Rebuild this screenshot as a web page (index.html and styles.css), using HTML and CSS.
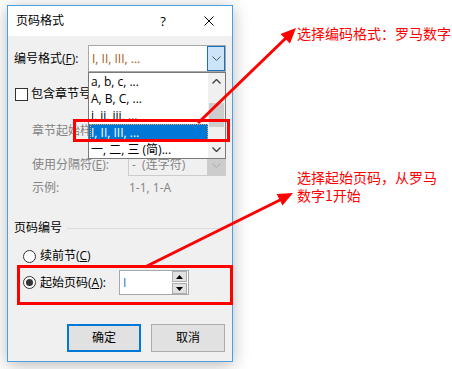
FILE: index.html
```html
<!DOCTYPE html>
<html lang="zh-CN">
<head>
<meta charset="utf-8">
<title>页码格式</title>
<link rel="stylesheet" href="styles.css">
</head>
<body>
<div class="page">
  <div class="dialog">
    <div class="titlebar">
      <span class="title">页码格式</span>
      <span class="cap-btn help">?</span>
      <span class="cap-btn close">
        <svg width="10" height="10" viewBox="0 0 10 10"><path d="M0.5 0.5L9.5 9.5M9.5 0.5L0.5 9.5" stroke="#000" stroke-width="1"/></svg>
      </span>
    </div>
    <div class="body">
      <div class="row r-format">
        <span class="lbl-main">编号格式(<u>F</u>):</span>
        <div class="combo focus">
          <span class="combo-text sel-text">I, II, III, ...</span>
          <span class="combo-btn active">
            <svg width="9" height="5" viewBox="0 0 9 5"><path d="M0.5 0.5L4.5 4.5L8.5 0.5" fill="none" stroke="#555" stroke-width="1"/></svg>
          </span>
          <div class="droplist">
            <ul class="items">
              <li>a, b, c, ...</li>
              <li>A, B, C, ...</li>
              <li>i, ii, iii, ...</li>
              <li class="selected"><span class="focus-rect">I, II, III, ...</span></li>
              <li>一, 二, 三 (简)...</li>
            </ul>
            <div class="scrollbar">
              <span class="sb-arrow">
                <svg width="9" height="5" viewBox="0 0 9 5"><path d="M0.5 4.5L4.5 0.5L8.5 4.5" fill="none" stroke="#444" stroke-width="1.4"/></svg>
              </span>
              <span class="sb-track"><span class="sb-thumb"></span></span>
              <span class="sb-arrow">
                <svg width="9" height="5" viewBox="0 0 9 5"><path d="M0.5 0.5L4.5 4.5L8.5 0.5" fill="none" stroke="#444" stroke-width="1.4"/></svg>
              </span>
            </div>
          </div>
        </div>
      </div>

      <div class="row r-check">
        <span class="checkbox"></span>
        <span class="chk-label">包含章节号(<u>N</u>)</span>
      </div>

      <div class="row r-indent r-style disabled">
        <span class="lbl-indent">章节起始样式(<u>P</u>):</span>
      </div>

      <div class="row r-indent r-sep disabled">
        <span class="lbl-indent">使用分隔符(<u>E</u>):</span>
        <div class="combo dis">
          <span class="combo-text">-&nbsp;&nbsp;(连字符)</span>
          <span class="combo-btn disbtn">
            <svg width="9" height="5" viewBox="0 0 9 5"><path d="M0.5 0.5L4.5 4.5L8.5 0.5" fill="none" stroke="#a8a8a8" stroke-width="1"/></svg>
          </span>
        </div>
      </div>

      <div class="row r-indent r-ex disabled">
        <span class="lbl-indent">示例:</span>
        <span class="ex-value">1-1, 1-A</span>
      </div>

      <div class="row r-group">
        <span class="group-title">页码编号</span>
        <span class="group-rule"></span>
      </div>

      <div class="row r-radio">
        <span class="radio"></span>
        <span class="radio-label">续前节(<u>C</u>)</span>
      </div>

      <div class="row r-radio r-start">
        <span class="radio on"></span>
        <span class="radio-label start-label">起始页码(<u>A</u>):</span>
        <div class="spin">
          <span class="spin-field">I</span>
          <span class="spin-btns">
            <span class="spin-btn"><svg width="7" height="4" viewBox="0 0 7 4"><path d="M0 4L3.5 0L7 4Z" fill="#000"/></svg></span>
            <span class="spin-btn"><svg width="7" height="4" viewBox="0 0 7 4"><path d="M0 0L3.5 4L7 0Z" fill="#000"/></svg></span>
          </span>
        </div>
      </div>

      <div class="row r-btns">
        <span class="btn default">确定</span>
        <span class="btn">取消</span>
      </div>
    </div>
  </div>

  <div class="notes">
    <p class="note note-1">选择编码格式：罗马数字</p>
    <p class="note note-2">选择起始页码，从罗马<br>数字1开始</p>
  </div>

  <svg class="overlay" width="452" height="369" viewBox="0 0 452 369">
    <rect x="74.5" y="120.5" width="154" height="20" fill="none" stroke="#ff0000" stroke-width="3"/>
    <rect x="18.5" y="266.5" width="213" height="37" fill="none" stroke="#ff0000" stroke-width="3"/>
    <line x1="198" y1="123" x2="287" y2="37" stroke="#ff0000" stroke-width="3"/>
    <polygon points="296,28 290,43.5 280.5,34" fill="#ff0000"/>
    <line x1="145" y1="267" x2="282" y2="199" stroke="#ff0000" stroke-width="3"/>
    <polygon points="293,193 282.5,205.6 276.7,194" fill="#ff0000"/>
  </svg>
</div>
</body>
</html>
```

FILE: styles.css
```css
* { box-sizing: border-box; }

html, body {
  margin: 0;
  padding: 0;
  background: #ffffff;
}

body {
  font-family: "Open Sans", "Noto Sans CJK SC", sans-serif;
  font-size: 12px;
  color: #000;
}

.page {
  position: relative;
  width: 452px;
  height: 369px;
  overflow: hidden;
  display: flex;
  align-items: flex-start;
}

u { text-decoration: underline; text-underline-offset: 1px; }

/* ---------- dialog ---------- */
.dialog {
  margin: 5px 0 0 7px;
  width: 226px;
  height: 357px;
  border: 1px solid #4aa0de;
  background: #f0f0f0;
  box-shadow: 0 3px 16px rgba(0, 0, 0, 0.28);
  display: flex;
  flex-direction: column;
}

.titlebar {
  height: 30px;
  background: #ffffff;
  display: flex;
  align-items: center;
  padding-left: 8px;
  flex: none;
}

.title {
  flex: 1;
  font-size: 12px;
  line-height: 16px;
}

.cap-btn {
  width: 46px;
  height: 30px;
  display: flex;
  align-items: center;
  justify-content: center;
}

.help {
  font-size: 13px;
  line-height: 16px;
}

.body {
  flex: 1;
  padding: 9px 6px 0 6px;
  display: flex;
  flex-direction: column;
}

.row {
  display: flex;
  align-items: center;
  line-height: 16px;
  flex: none;
}

/* row 1 */
.r-format { height: 27px; position: relative; z-index: 5; }

.lbl-main { width: 74px; white-space: nowrap; }

.combo {
  position: relative;
  display: flex;
  align-items: stretch;
  width: 138px;
  border: 1px solid #a8a8a8;
  background: #ffffff;
}

.combo.focus { height: 27px; }

.combo-text {
  flex: 1;
  display: flex;
  align-items: center;
  padding-left: 3px;
  white-space: nowrap;
  overflow: hidden;
}

.sel-text { color: #a35a14; }

.combo-btn {
  width: 18px;
  display: flex;
  align-items: center;
  justify-content: center;
}

.combo-btn.active {
  background: #cce4f7;
  border: 1px solid #1a6fc0;
}

/* drop-down list */
.droplist {
  position: absolute;
  left: -1px;
  top: 26px;
  width: 138px;
  height: 87px;
  border: 1px solid #7a7a7a;
  background: #ffffff;
  display: flex;
}

.items {
  list-style: none;
  margin: 0;
  padding: 0;
  flex: 1;
}

.items li {
  height: 17px;
  line-height: 17px;
  padding-left: 2px;
  white-space: nowrap;
  overflow: hidden;
}

.items li.selected {
  padding-left: 1px;
  background: #0078d7;
  color: #ffffff;
}

.focus-rect {
  display: block;
  height: 17px;
  line-height: 15px;
  border: 1px dotted #f0a050;
}

.scrollbar {
  width: 17px;
  background: #f0f0f0;
  display: flex;
  flex-direction: column;
}

.sb-arrow {
  height: 17px;
  display: flex;
  align-items: center;
  justify-content: center;
}

.sb-track {
  flex: 1;
  padding-top: 13px;
}

.sb-thumb {
  display: block;
  height: 24px;
  margin: 0 1px;
  background: #cdcdcd;
}

/* checkbox row */
.r-check {
  height: 20px;
  margin-top: 12px;
  padding-left: 1px;
}

.checkbox {
  width: 13px;
  height: 13px;
  border: 1px solid #333333;
  background: #ffffff;
  margin-right: 3px;
  flex: none;
}

.chk-label { white-space: nowrap; }

/* disabled rows */
.disabled { color: #838383; }

.r-indent { padding-left: 18px; }

.lbl-indent { width: 96px; white-space: nowrap; }

.r-style { height: 22px; margin-top: 16px; }
.r-sep { height: 22px; margin-top: 12px; }
.r-ex { height: 20px; margin-top: 2px; }

.combo.dis {
  width: 98px;
  height: 22px;
  border: 1px solid #cccccc;
  background: #f0f0f0;
}

.combo-btn.disbtn {
  background: #cccccc;
}

.ex-value { padding-left: 1px; }

/* group */
.r-group {
  height: 20px;
  margin-top: 20px;
}

.group-rule {
  flex: 1;
  height: 1px;
  background: #dcdcdc;
  margin-left: 5px;
}

/* radios */
.r-radio {
  height: 20px;
  margin-top: 8px;
  padding-left: 9px;
}

.r-start {
  height: 25px;
  margin-top: 4px;
}

.radio {
  width: 13px;
  height: 13px;
  border: 1px solid #333333;
  border-radius: 50%;
  background: #ffffff;
  margin-right: 4px;
  display: flex;
  align-items: center;
  justify-content: center;
  flex: none;
}

.radio.on::after {
  content: "";
  width: 7px;
  height: 7px;
  border-radius: 50%;
  background: #333333;
}

.start-label { width: 79px; white-space: nowrap; }

.spin {
  width: 70px;
  height: 25px;
  border: 1px solid #a8a8a8;
  background: #ffffff;
  display: flex;
}

.spin-field {
  flex: 1;
  padding-left: 3px;
  display: flex;
  align-items: center;
  color: #2a6fb8;
}

.spin-btns {
  width: 16px;
  display: flex;
  flex-direction: column;
  gap: 1px;
  padding: 0 1px 0 0;
}

.spin-btn {
  flex: 1;
  background: #e1e1e1;
  border: 1px solid #adadad;
  display: flex;
  align-items: center;
  justify-content: center;
}

/* buttons */
.r-btns {
  margin-top: 29px;
  justify-content: flex-end;
  gap: 10px;
  padding-right: 1px;
}

.btn {
  width: 74px;
  height: 28px;
  display: flex;
  align-items: center;
  justify-content: center;
  background: #e1e1e1;
  border: 1px solid #adadad;
}

.btn.default {
  border: 2px solid #0078d7;
}

/* notes */
.notes {
  margin-left: 64px;
  display: flex;
  flex-direction: column;
}

.note {
  margin: 0;
  color: #ff0000;
  font-family: "Noto Sans CJK SC", sans-serif;
  font-size: 14px;
  line-height: 18px;
  white-space: nowrap;
}

.note-1 { margin-top: 24px; }
.note-2 { margin-top: 126px; }

.overlay {
  position: absolute;
  left: 0;
  top: 0;
  pointer-events: none;
  z-index: 10;
}
```
